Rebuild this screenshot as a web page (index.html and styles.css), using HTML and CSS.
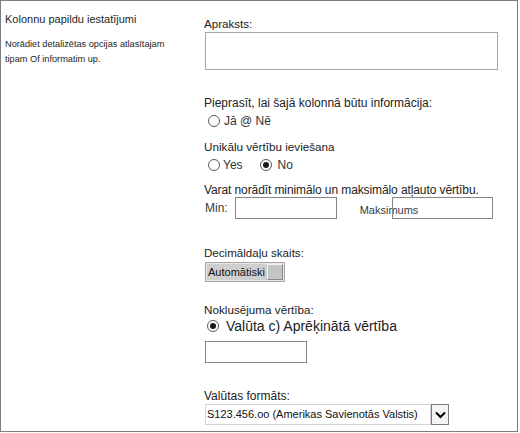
FILE: index.html
```html
<!DOCTYPE html>
<html lang="lv">
<head>
<meta charset="utf-8">
<title>Kolonnu papildu iestatījumi</title>
<link rel="stylesheet" href="styles.css">
</head>
<body>
<div class="panel">
  <div class="left">
    <div class="title">Kolonnu papildu iestatījumi</div>
    <div class="desc">Norādiet detalizētas opcijas atlasītajam<br>tipam Of informatim up.</div>
  </div>
  <div class="right">
    <div class="label l-apraksts">Apraksts:</div>
    <div class="textarea"></div>

    <div class="label l-require">Pieprasīt, lai šajā kolonnā būtu informācija:</div>
    <div class="radio-row r-require">
      <span class="radio"></span><span class="rtext">Jā @ Nē</span>
    </div>

    <div class="label l-unique">Unikālu vērtību ieviešana</div>
    <div class="radio-row r-unique">
      <span class="radio"></span><span class="rtext yes">Yes</span>
      <span class="radio on"></span><span class="rtext no">No</span>
    </div>

    <div class="label l-range">Varat norādīt minimālo un maksimālo atļauto vērtību.</div>
    <div class="minmax">
      <span class="mlabel">Min:</span>
      <span class="box min-box"></span>
      <span class="mlabel max-label">Maksimums</span>
      <span class="box max-box"></span>
    </div>

    <div class="label l-decimal">Decimāldaļu skaits:</div>
    <div class="auto-select">
      <span class="auto-val">Automātiski</span>
      <span class="auto-btn"></span>
    </div>

    <div class="label l-default">Noklusējuma vērtība:</div>
    <div class="radio-row r-default">
      <span class="radio on"></span><span class="rtext big">Valūta c) Aprēķinātā vērtība</span>
    </div>
    <div class="box default-box"></div>

    <div class="label l-format">Valūtas formāts:</div>
    <div class="cur-select">
      <span class="cur-val">S123.456.oo (Amerikas Savienotās Valstis)</span>
      <span class="cur-btn">
        <svg width="11" height="8" viewBox="0 0 11 8"><path d="M1 1.5 L5.5 6 L10 1.5" fill="none" stroke="#000" stroke-width="2"/></svg>
      </span>
    </div>
  </div>
</div>
</body>
</html>
```

FILE: styles.css
```css
html, body {
  margin: 0;
  padding: 0;
  background: #fff;
}

body {
  font-family: "Liberation Sans", Arial, sans-serif;
  color: #222;
}

.panel {
  width: 518px;
  height: 432px;
  box-sizing: border-box;
  border: 1px solid #7d7d7d;
  display: flex;
}

.left {
  width: 203px;
  padding: 10px 0 0 4px;
  box-sizing: border-box;
}

.title {
  font-size: 11px;
  line-height: 16px;
  color: #1e1e1e;
}

.desc {
  margin-top: 10px;
  font-size: 9.2px;
  line-height: 15px;
  color: #1e1e1e;
}

.right {
  flex: 1;
  padding-top: 15px;
  display: flex;
  flex-direction: column;
  align-items: flex-start;
}

.label {
  font-size: 12px;
  line-height: 16px;
  white-space: nowrap;
}

.l-apraksts { font-size: 11.6px; }
.l-require { margin-top: 25px; }
.l-unique { margin-top: 10px; font-size: 11.7px; }
.l-range { margin-top: 9px; letter-spacing: -0.1px; }
.l-decimal { margin-top: 26px; font-size: 11.6px; }
.l-default { margin-top: 20px; font-size: 11.7px; }
.l-format { margin-top: 25px; }

.textarea {
  margin-left: 1px;
  width: 293px;
  height: 38px;
  box-sizing: border-box;
  border: 1px solid #a6a6a6;
}

.radio-row {
  display: flex;
  align-items: center;
  height: 16px;
  margin-left: 4px;
  font-size: 12px;
}

.r-require { margin-top: 2px; }
.r-unique { margin-top: 2px; }
.r-default { margin-top: -1px; height: 18px; margin-left: 3px; }

.radio {
  position: relative;
  width: 12px;
  height: 12px;
  box-sizing: border-box;
  border: 1px solid #5a5a5a;
  border-radius: 50%;
  background: #fff;
  flex: none;
}

.radio.on::after {
  content: "";
  position: absolute;
  left: 2px;
  top: 2px;
  width: 6px;
  height: 6px;
  border-radius: 50%;
  background: #1a1a1a;
}

.rtext {
  margin-left: 4px;
  color: #333;
}

.rtext.yes { margin-left: 3px; margin-right: 17px; }
.rtext.no { margin-left: 6px; }
.rtext.big { font-size: 14px; margin-left: 7px; color: #222; }

.minmax {
  margin-top: -1px;
  margin-left: 1px;
  display: flex;
  align-items: center;
  height: 22px;
}

.mlabel {
  font-size: 12px;
  color: #3a3a3a;
  white-space: nowrap;
}

.box {
  display: block;
  height: 22px;
  box-sizing: border-box;
  border: 1px solid #868686;
  background: transparent;
}

.min-box {
  width: 102px;
  margin-left: 7px;
}

.max-label {
  font-size: 11px;
  margin-left: 23px;
  width: 32px;
  padding-top: 3px;
  overflow: visible;
}

.max-box {
  width: 101px;
}

.auto-select {
  margin-top: 1px;
  margin-left: 1px;
  width: 80px;
  height: 20px;
  box-sizing: border-box;
  border: 1px solid #a8a8a8;
  background: #e6e6e6;
  padding: 1px;
  display: flex;
}

.auto-val {
  flex: 1;
  background: #cfcfcf;
  font-size: 11px;
  line-height: 16px;
  padding-left: 1px;
  color: #111;
}

.auto-btn {
  width: 16px;
  box-sizing: border-box;
  background: #c4c4c4;
  border: 1px solid #8a8a8a;
  border-top-color: #f2f2f2;
  border-left-color: #f2f2f2;
}

.default-box {
  margin-top: 6px;
  margin-left: 1px;
  width: 102px;
}

.cur-select {
  margin-left: 1px;
  height: 21px;
  display: flex;
}

.cur-val {
  width: 226px;
  box-sizing: border-box;
  border: 1px solid #d4d4d4;
  font-size: 11px;
  line-height: 19px;
  padding-left: 1px;
  color: #111;
  white-space: nowrap;
}

.cur-btn {
  width: 18px;
  box-sizing: border-box;
  border: 1px solid #7a7a7a;
  background: #f4f4f4;
  display: flex;
  align-items: center;
  justify-content: center;
}
```
